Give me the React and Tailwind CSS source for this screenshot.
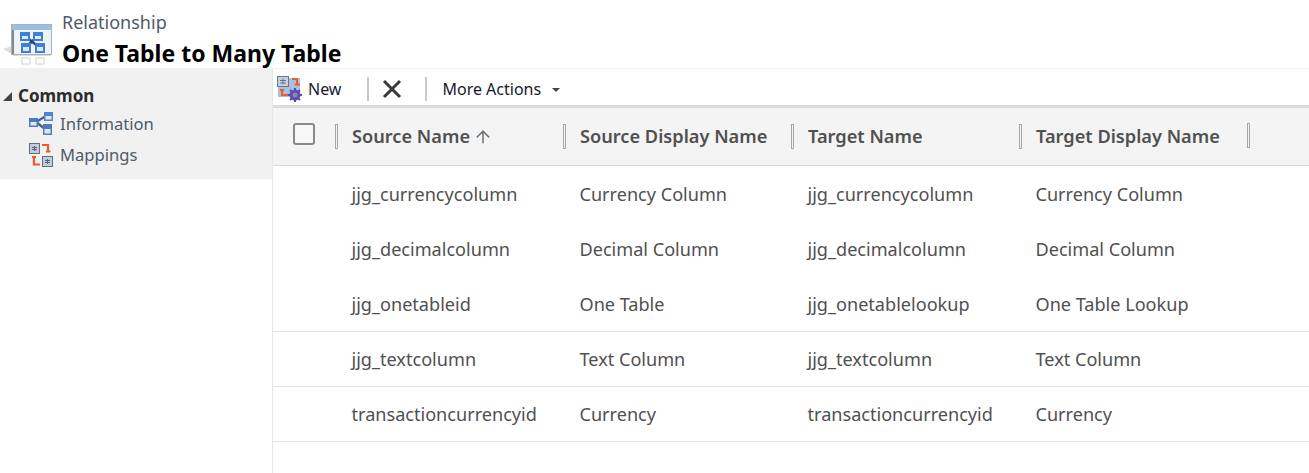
import { ArrowUp } from 'lucide-react';

const rows = [
    { source: 'jjg_currencycolumn', sourceDisplay: 'Currency Column', target: 'jjg_currencycolumn', targetDisplay: 'Currency Column', border: false },
    { source: 'jjg_decimalcolumn', sourceDisplay: 'Decimal Column', target: 'jjg_decimalcolumn', targetDisplay: 'Decimal Column', border: false },
    { source: 'jjg_onetableid', sourceDisplay: 'One Table', target: 'jjg_onetablelookup', targetDisplay: 'One Table Lookup', border: true },
    { source: 'jjg_textcolumn', sourceDisplay: 'Text Column', target: 'jjg_textcolumn', targetDisplay: 'Text Column', border: true },
    { source: 'transactioncurrencyid', sourceDisplay: 'Currency', target: 'transactioncurrencyid', targetDisplay: 'Currency', border: true },
];

// viewBox uses page coordinates so it lines up with the header
const RelationshipIcon = () => (
    <svg width="52" height="45" viewBox="2 24 52 45" className="shrink-0">
        <path d="M3 49 L12 46 L12 54 Z" fill="#dcdcdc" />
        <rect x="11.5" y="24.5" width="40" height="30" fill="#f0f3f6" stroke="#a9b2ba" />
        <rect x="12" y="25" width="39" height="5" fill="#9cc0e4" />
        <rect x="12" y="30" width="2" height="24" fill="#7d8890" />
        <path d="M25 36 L40 48 M38 36 L25 48" stroke="#27457c" strokeWidth="2.5" />
        <rect x="20" y="32" width="10" height="9" fill="#3d80d8" />
        <rect x="33" y="32" width="10" height="9" fill="#3d80d8" />
        <rect x="22" y="36" width="6" height="3" fill="#dfe7f0" />
        <rect x="35" y="36" width="6" height="3" fill="#dfe7f0" />
        <rect x="21" y="43" width="10" height="10" fill="#3d80d8" />
        <rect x="35" y="43" width="10" height="10" fill="#3d80d8" />
        <rect x="23" y="47" width="6" height="4" fill="#dfe7f0" />
        <rect x="37" y="47" width="6" height="4" fill="#dfe7f0" />
        <rect x="13" y="55" width="38" height="1" fill="#dadada" />
        <rect x="22" y="58" width="8" height="6" fill="none" stroke="#dde2e8" strokeWidth="1.5" />
        <rect x="36" y="58" width="8" height="6" fill="none" stroke="#dde2e8" strokeWidth="1.5" />
    </svg>
);

const InformationIcon = () => (
    <svg width="24" height="24" viewBox="0 0 24 24" className="shrink-0">
        <path d="M7 10 L17 4 M7 10 L16 17" stroke="#46638f" strokeWidth="2.5" />
        <rect x="0" y="6" width="9" height="9" fill="#4d7cc0" />
        <rect x="1.5" y="10" width="6" height="3.5" fill="#e3e8ee" />
        <rect x="15" y="0" width="9" height="9" fill="#4d86d8" />
        <rect x="16.5" y="4" width="6" height="3.5" fill="#e3e8ee" />
        <rect x="14" y="12" width="9" height="11" fill="#4d7cc0" />
        <rect x="15.5" y="17" width="6" height="4.5" fill="#e3e8ee" />
    </svg>
);

const MappingsIcon = () => (
    <svg width="24" height="24" viewBox="0 0 24 24" className="shrink-0">
        <rect x="0.5" y="0.5" width="10" height="10" fill="#c4ccd6" stroke="#5f6f84" />
        <path d="M3 4.5 H8 M3 6.5 H8 M5.5 3 V8" stroke="#59677a" />
        <rect x="13.5" y="13.5" width="10" height="10" fill="#c4ccd6" stroke="#5f6f84" />
        <path d="M16 17.5 H21 M16 19.5 H21 M18.5 16 V21" stroke="#59677a" />
        <path d="M13 2 H19 V9 M17 8.5 H21.5" stroke="#ee5b2b" strokeWidth="2.2" fill="none" />
        <path d="M11 21.5 H5 V13 M3 14 H7" stroke="#ee5b2b" strokeWidth="2.2" fill="none" />
    </svg>
);

const NewIcon = () => (
    <svg width="26" height="26" viewBox="0 0 26 26" className="shrink-0">
        <rect x="1" y="2" width="22" height="19" fill="#8ba9d8" opacity="0.75" />
        <rect x="0.5" y="0.5" width="11" height="10" fill="#c8d0da" stroke="#69788c" />
        <path d="M3 4.5 H9 M3 7 H9 M6 2.5 V8.5" stroke="#66748a" />
        <path d="M15 3 H20 V9 M18 8.5 H23" stroke="#ee5b2b" strokeWidth="2" fill="none" />
        <path d="M11 19 H5 V13 M3 14 H7" stroke="#ee5b2b" strokeWidth="2" fill="none" />
        <circle cx="18" cy="19" r="4" fill="#8b86cc" stroke="#5a4fb0" strokeWidth="3" />
        <path d="M18 12 V14 M18 24 V26 M11 19 H13 M23 19 H25 M13 14 L14.5 15.5 M23 14 L21.5 15.5 M13 24 L14.5 22.5 M23 24 L21.5 22.5" stroke="#5a4fb0" strokeWidth="2" />
    </svg>
);

const Grip = () => <span className="block h-[25px] w-[3px] border border-[#a6a6a6] bg-[#f4f4f4] shrink-0"></span>;

const ToolbarDivider = () => <span className="block h-[24px] w-[2px] bg-[#c4c9ce] shrink-0"></span>;

const HeaderCell = ({ label, arrow }) => (
    <div className="w-[228px] flex items-center shrink-0">
        <Grip />
        <span className="ml-[14px] text-[18.2px] font-semibold text-[#505050] whitespace-nowrap">{label}</span>
        {arrow && <ArrowUp size={20} strokeWidth={1.7} className="ml-[3px] mt-[2px] text-[#666666]" />}
    </div>
);

const App = () => {
    return (
        <div className="w-[1309px] h-[473px] overflow-hidden bg-white font-['Noto_Sans',sans-serif]">
            <header className="h-[69px] flex border-b border-[#f0f0f0] overflow-hidden">
                <div className="w-[62px] pl-[2px] pt-[24px] shrink-0">
                    <RelationshipIcon />
                </div>
                <div>
                    <div className="mt-[10px] h-[24px] leading-[24px] text-[18px] text-[#505a66]">Relationship</div>
                    <h1 className="mt-[5px] leading-[28px] text-[23px] font-bold text-black whitespace-nowrap">One Table to Many Table</h1>
                </div>
            </header>
            <div className="flex h-[404px]">
                <aside className="w-[272px] shrink-0">
                    <div className="h-[110px] bg-[#f1f1f1] pt-[15px]">
                        <div className="flex items-center h-[24px]">
                            <span className="ml-[3px] w-0 h-0 border-l-[9px] border-l-transparent border-b-[9px] border-b-[#444444]"></span>
                            <span className="ml-[6px] text-[17px] font-bold text-[#2b2b2b]">Common</span>
                        </div>
                        <div className="mt-[2px] h-[28px] pl-[29px] flex items-center gap-[7px] text-[16.6px] text-[#505a66]">
                            <InformationIcon />
                            <span>Information</span>
                        </div>
                        <div className="mt-[3px] h-[28px] pl-[29px] flex items-center gap-[7px] text-[16.6px] text-[#505a66]">
                            <MappingsIcon />
                            <span>Mappings</span>
                        </div>
                    </div>
                </aside>
                <main className="flex-1 border-l border-[#e6e6e6]">
                    <div className="h-[39px] flex items-center pl-[4px] pt-[4px] border-b-[3px] border-[#dcdcdc]">
                        <NewIcon />
                        <span className="ml-[5px] text-[16px] text-[#1a1a2e]">New</span>
                        <div className="ml-[26px]"><ToolbarDivider /></div>
                        <svg width="22" height="22" viewBox="0 0 22 22" className="ml-[12px]">
                            <path d="M3 3 L19 19 M19 3 L3 19" stroke="#3a3a3a" strokeWidth="3" />
                        </svg>
                        <div className="ml-[22px]"><ToolbarDivider /></div>
                        <span className="ml-[15px] text-[16px] text-[#1a1a2e]">More Actions</span>
                        <span className="ml-[11px] mt-[2px] w-0 h-0 border-x-[4px] border-x-transparent border-t-[4px] border-t-[#444444]"></span>
                    </div>
                    <div className="h-[58px] bg-[#f4f4f4] border-b border-[#d8d8d8] flex items-center">
                        <span className="block ml-[20px] mb-[5px] w-[22px] h-[22px] rounded-[3px] border-2 border-[#8a8a8a] bg-[#f8f8f8] shrink-0"></span>
                        <div className="ml-[20px] flex">
                            <HeaderCell label="Source Name" arrow />
                            <HeaderCell label="Source Display Name" />
                            <HeaderCell label="Target Name" />
                            <HeaderCell label="Target Display Name" />
                            <Grip />
                        </div>
                    </div>
                    <div className="pt-px">
                        {rows.map((row) => (
                            <div
                                key={row.source}
                                className={`h-[55px] flex items-center pl-[78.5px] text-[18.1px] text-[#505050] ${row.border ? 'border-b border-[#e2e2e2] pt-px' : ''}`}
                            >
                                <span className="w-[228px] shrink-0 whitespace-nowrap">{row.source}</span>
                                <span className="w-[228px] shrink-0 whitespace-nowrap">{row.sourceDisplay}</span>
                                <span className="w-[228px] shrink-0 whitespace-nowrap">{row.target}</span>
                                <span className="w-[228px] shrink-0 whitespace-nowrap">{row.targetDisplay}</span>
                            </div>
                        ))}
                    </div>
                </main>
            </div>
        </div>
    );
};

export default App;
